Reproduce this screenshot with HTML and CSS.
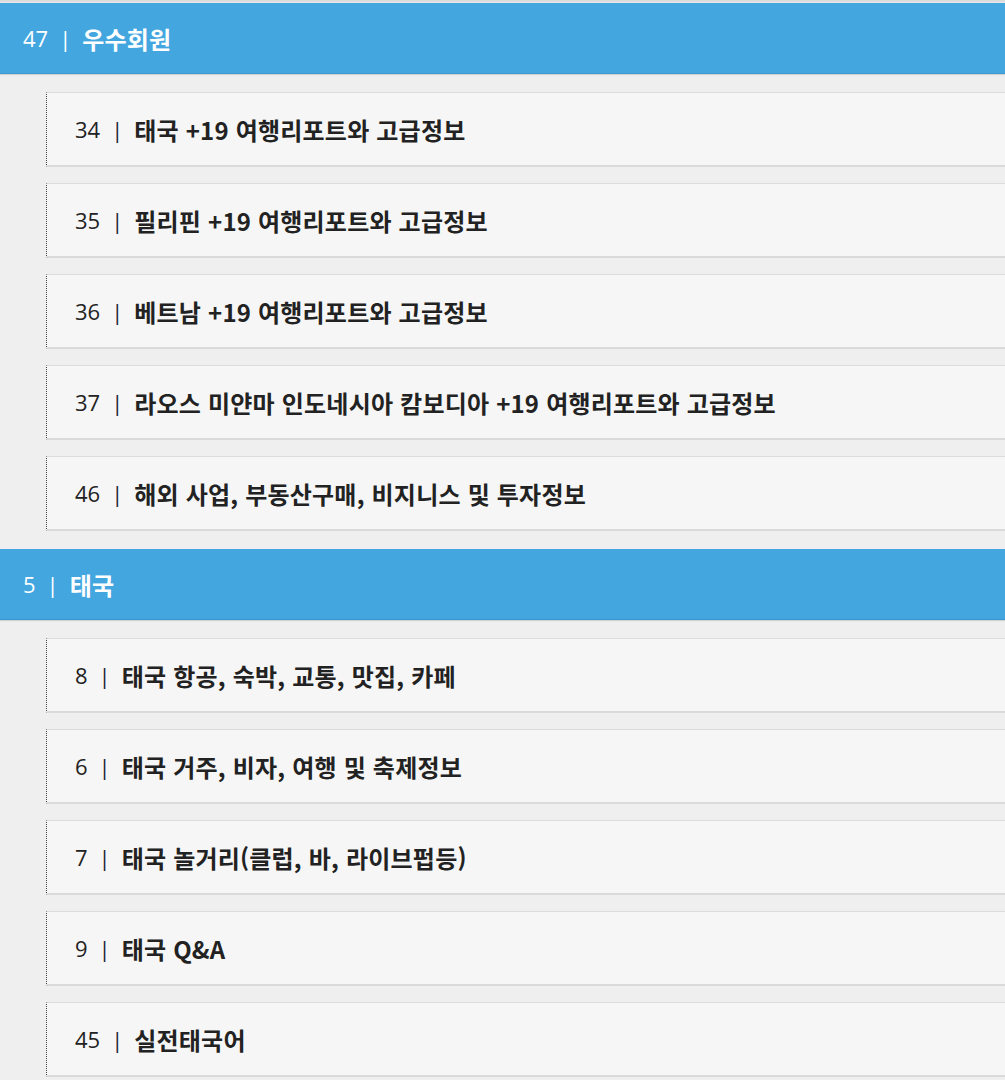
FILE: index.html
```html
<!DOCTYPE html>
<html lang="ko">
<head>
<meta charset="utf-8">
<title>Forum</title>
<link rel="stylesheet" href="styles.css">
</head>
<body>
<div class="topline"></div>
<section class="group">
  <div class="group-head"><span class="num">47</span><span class="sep">|</span><span class="name">우수회원</span></div>
  <div class="list">
    <div class="item"><span class="num">34</span><span class="sep">|</span><span class="name">태국 +19 여행리포트와 고급정보</span></div>
    <div class="item"><span class="num">35</span><span class="sep">|</span><span class="name">필리핀 +19 여행리포트와 고급정보</span></div>
    <div class="item"><span class="num">36</span><span class="sep">|</span><span class="name">베트남 +19 여행리포트와 고급정보</span></div>
    <div class="item"><span class="num">37</span><span class="sep">|</span><span class="name">라오스 미얀마 인도네시아 캄보디아 +19 여행리포트와 고급정보</span></div>
    <div class="item"><span class="num">46</span><span class="sep">|</span><span class="name">해외 사업, 부동산구매, 비지니스 및 투자정보</span></div>
  </div>
</section>
<section class="group">
  <div class="group-head"><span class="num">5</span><span class="sep">|</span><span class="name">태국</span></div>
  <div class="list">
    <div class="item"><span class="num">8</span><span class="sep">|</span><span class="name">태국 항공, 숙박, 교통, 맛집, 카페</span></div>
    <div class="item"><span class="num">6</span><span class="sep">|</span><span class="name">태국 거주, 비자, 여행 및 축제정보</span></div>
    <div class="item"><span class="num">7</span><span class="sep">|</span><span class="name">태국 놀거리(클럽, 바, 라이브펍등)</span></div>
    <div class="item"><span class="num">9</span><span class="sep">|</span><span class="name">태국 Q&amp;A</span></div>
    <div class="item"><span class="num">45</span><span class="sep">|</span><span class="name">실전태국어</span></div>
  </div>
</section>
</body>
</html>
```
FILE: styles.css
```css
html, body {
  margin: 0;
  padding: 0;
}
body {
  background: #efefef;
  font-family: "Open Sans", "Noto Sans CJK KR", sans-serif;
  font-size: 22px;
  color: #222;
  overflow: hidden;
}
.topline {
  height: 2px;
  background: #dcdcdc;
  border-bottom: 1px solid #e8e8e8;
}
.group-head {
  height: 70px;
  background: #43a6df;
  border-bottom: 1px solid #3b97cf;
  box-shadow: 0 1px 1px rgba(0, 0, 0, 0.12);
  display: flex;
  align-items: center;
  padding-left: 23px;
  color: #fff;
  white-space: nowrap;
}
.num {
  font-family: "Open Sans", sans-serif;
  font-weight: 400;
}
.sep {
  font-family: "Open Sans", sans-serif;
  padding: 0 11px;
}
.item .sep {
  color: #1c2638;
}
.name {
  font-family: "Noto Sans CJK KR", "Open Sans", sans-serif;
  font-weight: 700;
  font-size: 24px;
  letter-spacing: 0.2px;
}
.list {
  padding: 18px 0 18px 46px;
  display: flex;
  flex-direction: column;
  gap: 16px;
}
.item {
  height: 72px;
  background: #f6f6f6;
  border-top: 1px solid #dcdcdc;
  border-bottom: 2px solid #dadada;
  border-left: 1px dotted #444;
  display: flex;
  align-items: center;
  padding-left: 28px;
  white-space: nowrap;
  color: #222;
}
```
